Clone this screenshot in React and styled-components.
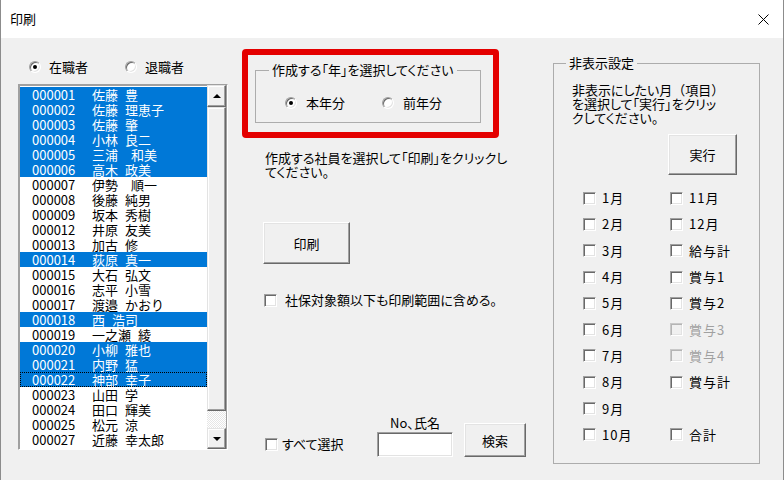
import React from 'react';
import styled, { createGlobalStyle } from 'styled-components';

const GlobalStyle = createGlobalStyle`
  html, body { margin: 0; padding: 0; background: #f0f0f0; }
  body {
    font-family: "Noto Sans CJK JP", "Noto Sans", sans-serif;
    font-size: 13px;
    color: #000;
    font-feature-settings: "palt";
  }
  * { box-sizing: border-box; }
`;

const Window = styled.div`
  width: 784px;
  height: 480px;
  display: flex;
  flex-direction: column;
  background: #f0f0f0;
  border-left: 1px solid #8c8c8c;
  border-right: 1px solid #8c8c8c;
  overflow: hidden;
`;

const TitleBar = styled.div`
  height: 38px;
  flex: none;
  background: #fff;
  display: flex;
  align-items: center;
  justify-content: space-between;
  padding: 0 14px 0 9px;
`;

const Title = styled.span`
  font-size: 13px;
  line-height: 16px;
`;

const Body = styled.div`
  flex: 1;
  display: flex;
  align-items: flex-start;
  min-height: 0;
`;

/* ---------- common controls ---------- */

const RadioRow = styled.div`
  display: flex;
  align-items: center;
  height: 16px;
  margin-top: ${p => p.$mt || 0}px;
  margin-left: ${p => p.$ml || 0}px;
`;

const RadioOption = styled.div`
  display: flex;
  align-items: center;
  width: ${p => (p.$w ? `${p.$w}px` : 'auto')};
  gap: ${p => p.$gap || 8}px;
`;

const RadioCircle = styled.span`
  position: relative;
  width: 12px;
  height: 12px;
  border-radius: 50%;
  background: #fff;
  border: 1px solid;
  border-color: #a0a0a0 #fff #fff #a0a0a0;
  box-shadow: inset 1px 1px 0 #696969, inset -1px -1px 0 #e3e3e3;
  flex: none;
  &::after {
    content: '';
    display: ${p => (p.$checked ? 'block' : 'none')};
    position: absolute;
    left: 3px;
    top: 3px;
    width: 4px;
    height: 4px;
    border-radius: 50%;
    background: #000;
  }
`;

const Label = styled.span`
  line-height: 16px;
  white-space: nowrap;
  color: ${p => (p.$disabled ? '#a0a0a0' : '#000')};
`;

const CheckItem = styled.div`
  display: flex;
  align-items: center;
  gap: ${p => p.$gap || 6}px;
  margin-left: ${p => p.$ml || 0}px;
  margin-top: ${p => p.$mt || 0}px;
  margin-bottom: ${p => p.$mb || 0}px;
  width: ${p => (p.$w ? `${p.$w}px` : 'auto')};
`;

const CheckBox = styled.span`
  width: 13px;
  height: 13px;
  flex: none;
  background: ${p => (p.$disabled ? '#f0f0f0' : '#fff')};
  border: 1px solid;
  border-color: ${p => (p.$disabled ? '#c8c8c8 #fff #fff #c8c8c8' : '#a0a0a0 #fff #fff #a0a0a0')};
  box-shadow: ${p =>
    p.$disabled
      ? 'inset 1px 1px 0 #b4b4b4, inset -1px -1px 0 #e3e3e3'
      : 'inset 1px 1px 0 #696969, inset -1px -1px 0 #e3e3e3'};
`;

const Button = styled.div`
  width: ${p => p.$w}px;
  height: ${p => p.$h}px;
  margin-top: ${p => p.$mt || 0}px;
  margin-left: ${p => p.$ml || 0}px;
  display: flex;
  align-items: center;
  justify-content: center;
  background: #f0f0f0;
  border: 1px solid;
  border-color: #fff #696969 #696969 #fff;
  box-shadow: inset -1px -1px 0 #a0a0a0, inset 1px 1px 0 #e3e3e3;
  font-size: 13px;
  flex: none;
`;

const GroupBox = styled.fieldset`
  margin: 0;
  padding: 0;
  border: 1px solid #acacac;
  min-width: 0;
`;

const Legend = styled.legend`
  margin-left: ${p => p.$ml || 12}px;
  padding: 0 3px;
  line-height: 14px;
  font-size: 13px;
  white-space: nowrap;
`;

const Para = styled.div`
  margin-top: ${p => p.$mt || 0}px;
  margin-left: ${p => p.$ml || 0}px;
  line-height: 14px;
  white-space: nowrap;
`;

const FullWidth = styled.span`
  font-feature-settings: normal;
`;

/* ---------- left column ---------- */

const LeftCol = styled.div`
  width: 210px;
  margin-left: 17px;
  display: flex;
  flex-direction: column;
`;

const ListBox = styled.div`
  margin-top: 9px;
  width: 210px;
  height: 366px;
  display: flex;
  border: 1px solid;
  border-color: #a0a0a0 #fff #fff #a0a0a0;
  box-shadow: inset 1px 1px 0 #a0a0a0;
  padding: 1px 0 0 1px;
  background: #fff;
`;

const Items = styled.div`
  flex: 1;
  padding-top: 1px;
  font-feature-settings: normal;
`;

const Row = styled.div`
  height: 15px;
  display: grid;
  grid-template-columns: 60px 1fr;
  padding-left: 12px;
  line-height: 15px;
  font-size: 13px;
  white-space: pre;
  word-spacing: 4px;
  background: ${p => (p.$sel ? '#0078d7' : 'transparent')};
  color: ${p => (p.$sel ? '#fff' : '#000')};
  outline: ${p => (p.$focus ? '1px dotted #000' : 'none')};
  outline-offset: -1px;
`;

const ScrollBar = styled.div`
  width: 20px;
  display: flex;
  flex-direction: column;
  border-right: 1px solid #a0a0a0;
  margin-top: -1px;
`;

const ScrollButton = styled.div`
  height: ${p => p.$h}px;
  flex: none;
  display: flex;
  align-items: center;
  justify-content: center;
  background: #f0f0f0;
  border: 1px solid;
  border-color: #e3e3e3 #696969 #696969 #e3e3e3;
  box-shadow: inset -1px -1px 0 #a0a0a0, inset 1px 1px 0 #fff;
`;

const Arrow = styled.span`
  width: 0;
  height: 0;
  border-left: 4px solid transparent;
  border-right: 4px solid transparent;
  ${p => (p.$up ? 'border-bottom: 4px solid #000;' : 'border-top: 4px solid #000;')}
`;

const Thumb = styled.div`
  height: 304px;
  flex: none;
  background: #f0f0f0;
  border: 1px solid;
  border-color: #e3e3e3 #696969 #696969 #e3e3e3;
  box-shadow: inset -1px -1px 0 #a0a0a0, inset 1px 1px 0 #fff;
`;

const Track = styled.div`
  flex: 1;
  background: repeating-conic-gradient(#fff 0 25%, #e6e6e6 0 50%) 0 0 / 2px 2px;
`;

/* ---------- middle column ---------- */

const MidCol = styled.div`
  width: 290px;
  margin-left: 14px;
  align-self: stretch;
  display: flex;
  flex-direction: column;
  padding-bottom: 23px;
`;

const RedFrame = styled.div`
  margin-top: 11px;
  width: 257px;
  height: 89px;
  border: 6px solid #e40000;
  border-radius: 4px;
  padding: 8px 12px 9px 7px;
  display: flex;
`;

const YearGroup = styled(GroupBox)`
  flex: 1;
`;

const BottomRow = styled.div`
  margin-top: auto;
  display: flex;
  align-items: flex-end;
`;

const SearchField = styled.div`
  width: 76px;
  display: flex;
  flex-direction: column;
  align-items: center;
`;

const FieldLabel = styled.span`
  line-height: 14px;
  margin-bottom: 2px;
  white-space: nowrap;
`;

const TextInput = styled.div`
  width: 76px;
  height: 25px;
  background: #fff;
  border: 1px solid;
  border-color: #a0a0a0 #fff #fff #a0a0a0;
  box-shadow: inset 1px 1px 0 #696969, inset -1px -1px 0 #e3e3e3;
`;

/* ---------- right column ---------- */

const HideGroup = styled(GroupBox)`
  width: 207px;
  height: 408px;
  margin-top: 18px;
  margin-left: 21px;
  display: flex;
  flex-direction: column;
`;

const MonthGrid = styled.div`
  margin-top: 10px;
  margin-left: 29px;
  display: grid;
  grid-template-columns: 87px 87px;
  grid-auto-rows: 26.3px;
  align-items: center;
`;

const MonthLabel = styled(Label)`
  letter-spacing: 1px;
`;

const CloseIcon = () => (
  <svg width="11" height="11" viewBox="0 0 11 11">
    <path d="M0.5 0.5 L10.5 10.5 M10.5 0.5 L0.5 10.5" stroke="#000" strokeWidth="1" fill="none" />
  </svg>
);

const employees = [
  ['000001', '佐藤 豊', true],
  ['000002', '佐藤 理恵子', true],
  ['000003', '佐藤 肇', true],
  ['000004', '小林 良二', true],
  ['000005', '三浦　和美', true],
  ['000006', '高木 政美', true],
  ['000007', '伊勢　順一'],
  ['000008', '後藤 純男'],
  ['000009', '坂本 秀樹'],
  ['000012', '井原 友美'],
  ['000013', '加古 修'],
  ['000014', '荻原 真一', true],
  ['000015', '大石 弘文'],
  ['000016', '志平 小雪'],
  ['000017', '渡邉 かおり'],
  ['000018', '西 浩司', true],
  ['000019', '一之瀬 綾'],
  ['000020', '小柳 雅也', true],
  ['000021', '内野 猛', true],
  ['000022', '神部 幸子', true, true],
  ['000023', '山田 学'],
  ['000024', '田口 輝美'],
  ['000025', '松元 涼'],
  ['000027', '近藤 幸太郎'],
];

const months = [
  ['1月'], ['11月'],
  ['2月'], ['12月'],
  ['3月'], ['給与計'],
  ['4月'], ['賞与1'],
  ['5月'], ['賞与2'],
  ['6月'], ['賞与3', true],
  ['7月'], ['賞与4', true],
  ['8月'], ['賞与計'],
  ['9月'], null,
  ['10月'], ['合計'],
];

export default function App() {
  return (
    <>
      <GlobalStyle />
      <Window>
        <TitleBar>
          <Title>印刷</Title>
          <CloseIcon />
        </TitleBar>
        <Body>
          <LeftCol>
            <RadioRow $mt={21} $ml={11}>
              <RadioOption $w={96}>
                <RadioCircle $checked />
                <Label>在職者</Label>
              </RadioOption>
              <RadioOption>
                <RadioCircle />
                <Label>退職者</Label>
              </RadioOption>
            </RadioRow>
            <ListBox>
              <Items>
                {employees.map(([code, name, sel, focus]) => (
                  <Row key={code} $sel={sel} $focus={focus}>
                    <span>{code}</span>
                    <span>{name}</span>
                  </Row>
                ))}
              </Items>
              <ScrollBar>
                <ScrollButton $h={22}><Arrow $up /></ScrollButton>
                <Thumb />
                <Track />
                <ScrollButton $h={21}><Arrow /></ScrollButton>
              </ScrollBar>
            </ListBox>
          </LeftCol>

          <MidCol>
            <RedFrame>
              <YearGroup>
                <Legend $ml={13}>作成する「年」を選択してください</Legend>
                <RadioRow $mt={18} $ml={29}>
                  <RadioOption $w={97} $gap={9}>
                    <RadioCircle $checked />
                    <Label>本年分</Label>
                  </RadioOption>
                  <RadioOption $gap={9}>
                    <RadioCircle />
                    <Label>前年分</Label>
                  </RadioOption>
                </RadioRow>
              </YearGroup>
            </RedFrame>
            <Para $mt={13} $ml={23}>
              作成する社員を選択して「印刷」をクリックし<br />てください。
            </Para>
            <Button $w={87} $h={42} $mt={43} $ml={21}>印刷</Button>
            <CheckItem $mt={28} $ml={22} $gap={8}>
              <CheckBox />
              <Label>社保対象額以下も印刷範囲に含める。</Label>
            </CheckItem>
            <BottomRow>
              <CheckItem $ml={23} $w={112} $gap={4} $mb={5}>
                <CheckBox />
                <Label>すべて選択</Label>
              </CheckItem>
              <SearchField>
                <FieldLabel>No、氏名</FieldLabel>
                <TextInput />
              </SearchField>
              <Button $w={62} $h={34} $ml={11}>検索</Button>
            </BottomRow>
          </MidCol>

          <HideGroup>
            <Legend $ml={12}>非表示設定</Legend>
            <Para $mt={13} $ml={18}>
              非表示にしたい月<FullWidth>（項目）</FullWidth><br />
              を選択して「実行」をクリッ<br />
              クしてください。
            </Para>
            <Button $w={69} $h={41} $mt={9} $ml={114}>実行</Button>
            <MonthGrid>
              {months.map((m, i) =>
                m ? (
                  <CheckItem key={i} $gap={6}>
                    <CheckBox $disabled={m[1]} />
                    <MonthLabel $disabled={m[1]}>{m[0]}</MonthLabel>
                  </CheckItem>
                ) : (
                  <span key={i} />
                )
              )}
            </MonthGrid>
          </HideGroup>
        </Body>
      </Window>
    </>
  );
}
